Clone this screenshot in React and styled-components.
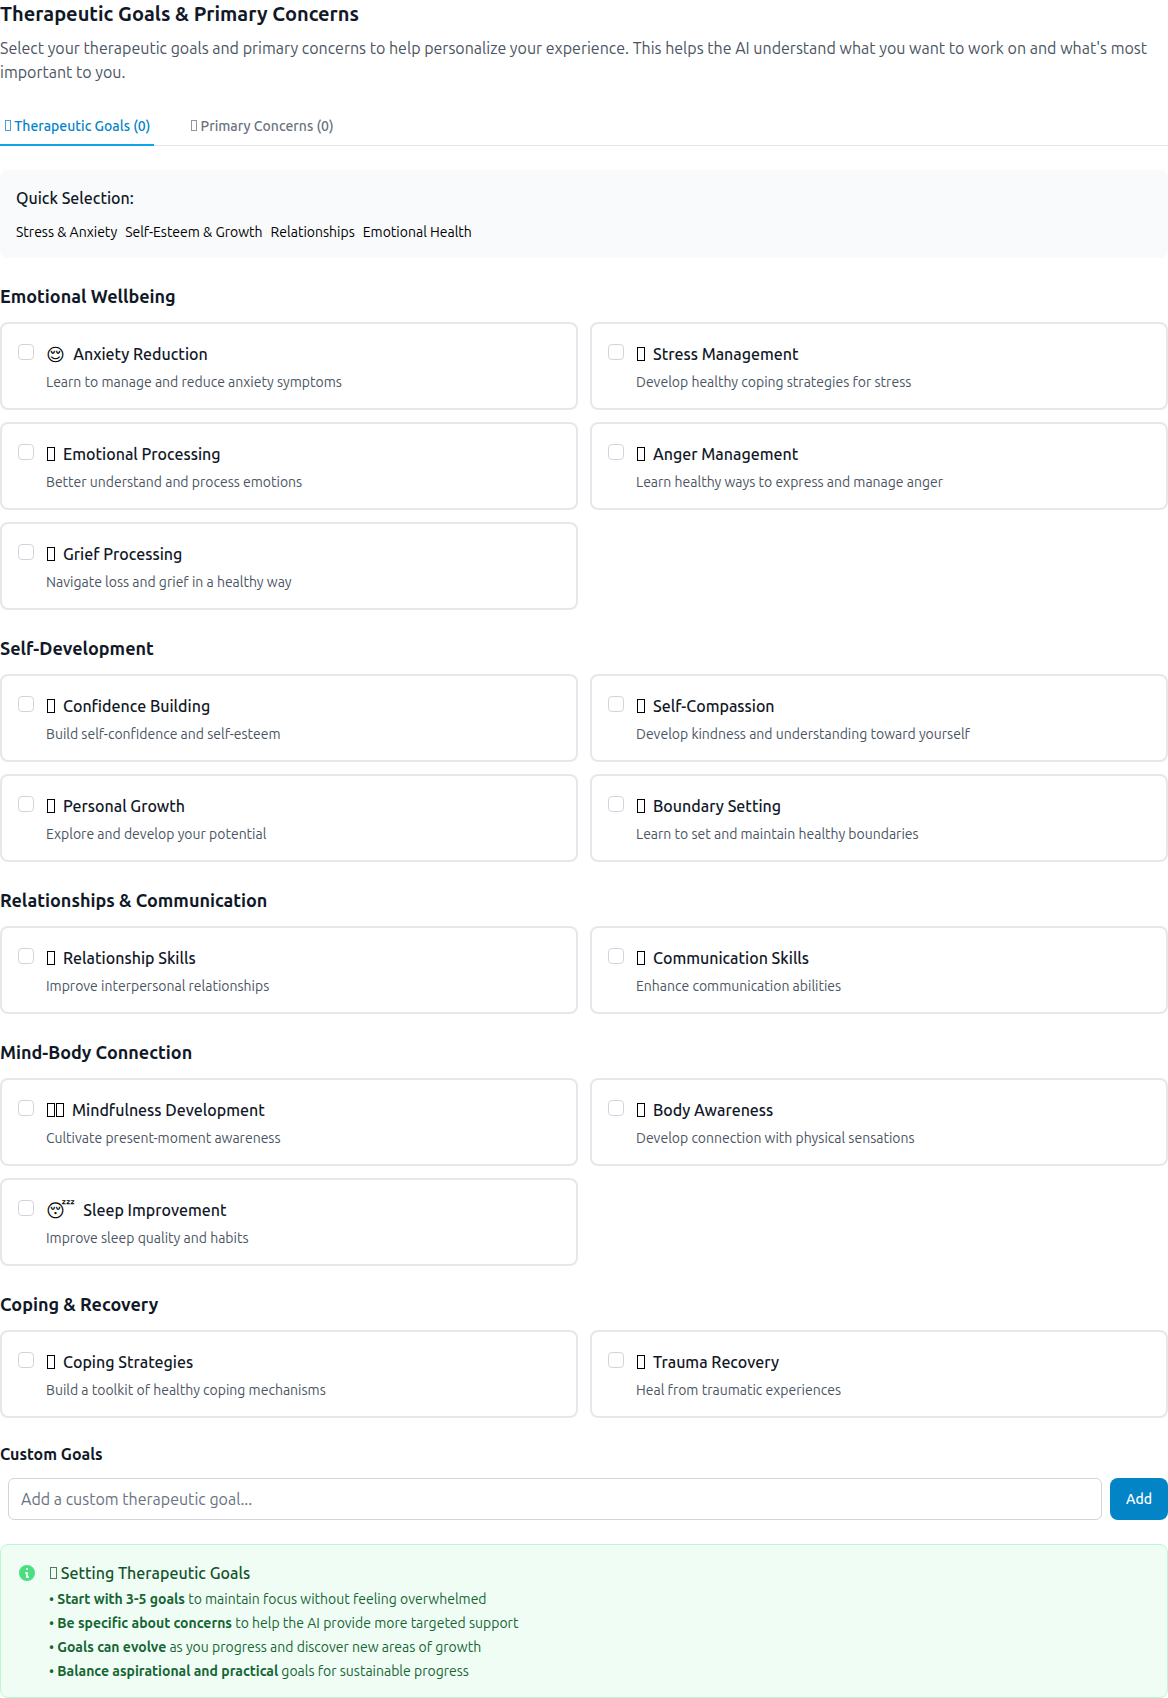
import React, { useState } from "react";
import styled, { createGlobalStyle } from "styled-components";

const GlobalStyle = createGlobalStyle`
  *, *::before, *::after { box-sizing: border-box; }
  body {
    margin: 0;
    background: #fff;
    color: #111827;
    font-family: Ubuntu, "Noto Sans", sans-serif;
    font-size: 16px;
    line-height: 24px;
  }
  h2, h3, h4, p, ul { margin: 0; padding: 0; }
  button, input { font: inherit; }
`;

const Page = styled.main`
  display: flex;
  flex-direction: column;
  gap: 24px;
`;

const Header = styled.header`
  display: flex;
  flex-direction: column;
  gap: 8px;
`;

const Title = styled.h2`
  font-size: 20px;
  line-height: 28px;
  font-weight: 600;
`;

const Lead = styled.p`
  color: #4b5563;
`;

const Tabs = styled.nav`
  display: flex;
  gap: 32px;
  height: 38px;
  border-bottom: 1px solid #e5e7eb;
`;

const Tab = styled.button`
  height: 38px;
  padding: 8px 4px;
  border: 0;
  border-bottom: 2px solid ${(p) => (p.$active ? "#0ea5e9" : "transparent")};
  background: none;
  color: ${(p) => (p.$active ? "#0284c7" : "#6b7280")};
  font-size: 14px;
  line-height: 20px;
  font-weight: 500;
  white-space: nowrap;
`;

const Quick = styled.section`
  display: flex;
  flex-direction: column;
  gap: 12px;
  padding: 16px;
  border-radius: 8px;
  background: #f9fafb;
`;

const QuickTitle = styled.h3`
  font-size: 16px;
  font-weight: 500;
`;

const QuickList = styled.div`
  display: flex;
  gap: 8px;
`;

const QuickButton = styled.button`
  padding: 0;
  border: 0;
  background: none;
  color: #000;
  font-size: 14px;
  line-height: 20px;
`;

const Group = styled.section`
  display: flex;
  flex-direction: column;
  gap: 12px;
`;

const GroupTitle = styled.h3`
  font-size: 18px;
  line-height: 28px;
  font-weight: 600;
`;

const Grid = styled.div`
  display: grid;
  grid-template-columns: 1fr 1fr;
  gap: 12px;
`;

const Card = styled.label`
  display: flex;
  gap: 12px;
  height: 88px;
  padding: 16px;
  border: 2px solid #e5e7eb;
  border-radius: 8px;
`;

const Check = styled.input`
  appearance: none;
  flex: none;
  width: 16px;
  height: 16px;
  margin: 4px 0 0;
  border: 1px solid #d1d5db;
  border-radius: 4px;
  background: #fff;
`;

const CardBody = styled.div`
  display: flex;
  flex-direction: column;
  gap: 4px;
`;

const CardHead = styled.div`
  display: flex;
  align-items: center;
  gap: 8px;
  height: 28px;
`;

const Emoji = styled.span`
  padding-right: 0.4px;
  color: #000;
  font-family: Ubuntu, "DejaVu Sans", sans-serif;
  font-size: 18px;
  line-height: 28px;
`;

const Box = styled.span`
  display: inline-block;
  flex: none;
  width: ${(p) => p.$w}px;
  height: ${(p) => p.$h}px;
  margin-left: 1px;
  border: 1px solid currentColor;
  opacity: ${(p) => (p.$soft ? 0.75 : 1)};
`;

const Boxes = styled.span`
  display: flex;
  color: #000;
`;

const CardTitle = styled.span`
  font-weight: 500;
`;

const CardText = styled.span`
  color: #4b5563;
  font-size: 14px;
  line-height: 20px;
`;

const CustomTitle = styled.h4`
  font-size: 16px;
  font-weight: 600;
`;

const AddRow = styled.div`
  display: flex;
  gap: 8px;
  padding-left: 8px;
`;

const AddInput = styled.input`
  flex: 1;
  height: 42px;
  padding: 8px 12px;
  border: 1px solid #d1d5db;
  border-radius: 6px;
  &::placeholder { color: #6b7280; opacity: 1; }
`;

const AddButton = styled.button`
  width: 58px;
  height: 42px;
  padding: 0;
  border: 0;
  border-radius: 8px;
  background: #0284c7;
  color: #fff;
  font-size: 14px;
  font-weight: 500;
`;

const Info = styled.aside`
  display: flex;
  gap: 12px;
  padding: 16px;
  border: 1px solid #bbf7d0;
  border-radius: 8px;
  background: #f0fdf4;
`;

const InfoIcon = styled.svg`
  flex: none;
  width: 20px;
  height: 20px;
  margin-top: 2px;
  fill: #4ade80;
`;

const InfoBody = styled.div`
  display: flex;
  flex-direction: column;
  gap: 4px;
`;

const InfoTitle = styled.h3`
  color: #14532d;
  font-size: 16px;
  font-weight: 500;
`;

const Tips = styled.ul`
  display: flex;
  flex-direction: column;
  gap: 4px;
  list-style: none;
  color: #166534;
  font-size: 14px;
  line-height: 20px;
  strong { font-weight: 700; }
`;

// A goal's mark is either an emoji or a number of empty boxes.
const groups = [
  ["Emotional Wellbeing", [
    ["😌", "Anxiety Reduction", "Learn to manage and reduce anxiety symptoms"],
    [1, "Stress Management", "Develop healthy coping strategies for stress"],
    [1, "Emotional Processing", "Better understand and process emotions"],
    [1, "Anger Management", "Learn healthy ways to express and manage anger"],
    [1, "Grief Processing", "Navigate loss and grief in a healthy way"],
  ]],
  ["Self-Development", [
    [1, "Confidence Building", "Build self-confidence and self-esteem"],
    [1, "Self-Compassion", "Develop kindness and understanding toward yourself"],
    [1, "Personal Growth", "Explore and develop your potential"],
    [1, "Boundary Setting", "Learn to set and maintain healthy boundaries"],
  ]],
  ["Relationships & Communication", [
    [1, "Relationship Skills", "Improve interpersonal relationships"],
    [1, "Communication Skills", "Enhance communication abilities"],
  ]],
  ["Mind-Body Connection", [
    [2, "Mindfulness Development", "Cultivate present-moment awareness"],
    [1, "Body Awareness", "Develop connection with physical sensations"],
    ["😴", "Sleep Improvement", "Improve sleep quality and habits"],
  ]],
  ["Coping & Recovery", [
    [1, "Coping Strategies", "Build a toolkit of healthy coping mechanisms"],
    [1, "Trauma Recovery", "Heal from traumatic experiences"],
  ]],
];

const tips = [
  ["Start with 3-5 goals", "to maintain focus without feeling overwhelmed"],
  ["Be specific about concerns", "to help the AI provide more targeted support"],
  ["Goals can evolve", "as you progress and discover new areas of growth"],
  ["Balance aspirational and practical", "goals for sustainable progress"],
];

function Mark({ value }) {
  if (typeof value === "string") return <Emoji>{value}</Emoji>;
  return (
    <Boxes>
      {Array.from({ length: value }, (_, i) => <Box key={i} $w={8} $h={14} />)}
    </Boxes>
  );
}

export default function App() {
  const [custom, setCustom] = useState("");
  return (
    <Page>
      <GlobalStyle />
      <Header>
        <Title>Therapeutic Goals &amp; Primary Concerns</Title>
        <Lead>
          Select your therapeutic goals and primary concerns to help personalize your experience. This helps the AI understand what you want to work on and what's most important to you.
        </Lead>
      </Header>
      <Tabs>
        <Tab $active><Box $w={6} $h={11} $soft /> Therapeutic Goals (0)</Tab>
        <Tab><Box $w={6} $h={11} $soft /> Primary Concerns (0)</Tab>
      </Tabs>
      <Quick>
        <QuickTitle>Quick Selection:</QuickTitle>
        <QuickList>
          {["Stress & Anxiety", "Self-Esteem & Growth", "Relationships", "Emotional Health"].map((t) => (
            <QuickButton key={t}>{t}</QuickButton>
          ))}
        </QuickList>
      </Quick>
      {groups.map(([name, goals]) => (
        <Group key={name}>
          <GroupTitle>{name}</GroupTitle>
          <Grid>
            {goals.map(([mark, title, text]) => (
              <Card key={title}>
                <Check type="checkbox" />
                <CardBody>
                  <CardHead><Mark value={mark} /><CardTitle>{title}</CardTitle></CardHead>
                  <CardText>{text}</CardText>
                </CardBody>
              </Card>
            ))}
          </Grid>
        </Group>
      ))}
      <Group>
        <CustomTitle>Custom Goals</CustomTitle>
        <AddRow>
          <AddInput
            placeholder="Add a custom therapeutic goal..."
            value={custom}
            onChange={(e) => setCustom(e.target.value)}
          />
          <AddButton>Add</AddButton>
        </AddRow>
      </Group>
      <Info>
        <InfoIcon viewBox="0 0 20 20">
          <path fillRule="evenodd" clipRule="evenodd" d="M18 10a8 8 0 11-16 0 8 8 0 0116 0zm-7-4a1 1 0 11-2 0 1 1 0 012 0zM9 9a1 1 0 000 2v3a1 1 0 001 1h1a1 1 0 100-2v-3a1 1 0 00-1-1H9z" />
        </InfoIcon>
        <InfoBody>
          <InfoTitle><Box $w={7} $h={12} $soft /> Setting Therapeutic Goals</InfoTitle>
          <Tips>
            {tips.map(([lead, rest]) => (
              <li key={lead}>• <strong>{lead}</strong> {rest}</li>
            ))}
          </Tips>
        </InfoBody>
      </Info>
    </Page>
  );
}
